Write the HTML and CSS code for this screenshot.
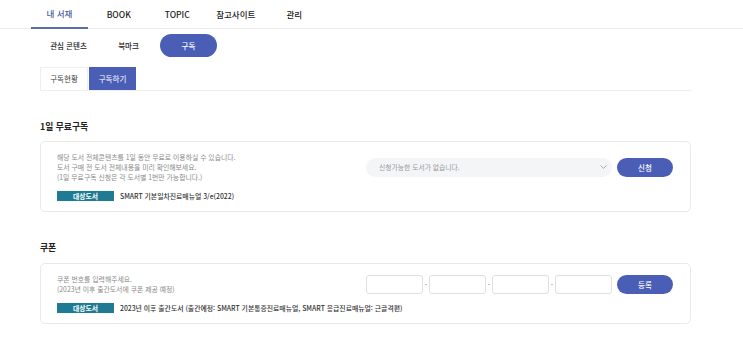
FILE: index.html
```html
<!DOCTYPE html>
<html lang="ko">
<head>
  <meta charset="UTF-8">
  <meta name="viewport" content="width=device-width, initial-scale=1.0">
  <title>내 서재 - 구독</title>
  <link rel="stylesheet" href="styles.css">
</head>
<body>
  <nav class="gnb">
    <a class="gnb-item active">내 서재</a>
    <a class="gnb-item">BOOK</a>
    <a class="gnb-item">TOPIC</a>
    <a class="gnb-item">참고사이트</a>
    <a class="gnb-item">관리</a>
  </nav>

  <div class="wrap">
    <div class="sub-menu">
      <a class="sub-item">관심 콘텐츠</a>
      <a class="sub-item">북마크</a>
      <a class="sub-item on">구독</a>
    </div>

    <div class="tabs">
      <a class="tab">구독현황</a>
      <a class="tab on">구독하기</a>
    </div>

    <h3 class="sec-title">1일 무료구독</h3>
    <div class="card">
      <div class="card-row">
        <p class="desc">
          해당 도서 전체콘텐츠를 1일 동안 무료로 이용하실 수 있습니다.<br>
          도서 구매 전 도서 전체내용을 미리 확인해보세요.<br>
          (1일 무료구독 신청은 각 도서별 1번만 가능합니다.)
        </p>
        <div class="controls">
          <div class="select">
            <span>신청가능한 도서가 없습니다.</span>
            <svg width="7" height="4" viewBox="0 0 7 4"><path d="M0.5 0.5 L3.5 3.3 L6.5 0.5" fill="none" stroke="#999" stroke-width="0.8"/></svg>
          </div>
          <button class="btn">신청</button>
        </div>
      </div>
      <div class="target">
        <span class="badge">대상도서</span>
        <span class="target-name">SMART 기본일차진료매뉴얼 3/e(2022)</span>
      </div>
    </div>

    <h3 class="sec-title second">쿠폰</h3>
    <div class="card">
      <div class="card-row">
        <p class="desc">
          쿠폰 번호를 입력해주세요.<br>
          (2023년 이후 출간도서에 쿠폰 제공 예정)
        </p>
        <div class="controls">
          <div class="coupon">
            <input type="text" class="code">
            <span class="dash">-</span>
            <input type="text" class="code">
            <span class="dash">-</span>
            <input type="text" class="code">
            <span class="dash">-</span>
            <input type="text" class="code">
          </div>
          <button class="btn">등록</button>
        </div>
      </div>
      <div class="target">
        <span class="badge">대상도서</span>
        <span class="target-name">2023년 이후 출간도서 (출간예정: SMART 기본통증진료매뉴얼, SMART 응급진료매뉴얼: 근골격편)</span>
      </div>
    </div>
  </div>
</body>
</html>
```

FILE: styles.css
```css
body {
  margin: 0;
  font-family: "Noto Sans CJK KR", "Noto Sans", sans-serif;
  color: #222;
  background: #fff;
}
a {
  cursor: pointer;
}

/* 상단 메뉴 */
.gnb {
  display: flex;
  height: 28px;
  padding-left: 31px;
  border-bottom: 1px solid #ebebeb;
}
.gnb-item {
  box-sizing: border-box;
  width: 58.5px;
  height: 29px;
  line-height: 28px;
  text-align: center;
  font-size: 8.5px;
  font-weight: 500;
  color: #222;
}
.gnb-item.active {
  width: 57px;
  margin-right: 1.5px;
  color: #4a5a9c;
  border-bottom: 2px solid #5b6fa6;
  line-height: 27px;
}

.wrap {
  width: 651px;
  margin-left: 40px;
}

/* 서브 메뉴 */
.sub-menu {
  display: flex;
  gap: 3px;
  padding-top: 5px;
}
.sub-item {
  width: 57px;
  height: 23px;
  line-height: 23px;
  text-align: center;
  font-size: 7.5px;
  font-weight: 500;
  color: #222;
  border-radius: 12px;
}
.sub-item.on {
  background: #4b5eb6;
  color: #fff;
}

/* 탭 */
.tabs {
  display: flex;
  margin-top: 10px;
  border-bottom: 1px solid #eee;
}
.tab {
  box-sizing: border-box;
  width: 48px;
  height: 23px;
  line-height: 22px;
  text-align: center;
  font-size: 7.5px;
  color: #444;
  border: 1px solid #eee;
  border-bottom: none;
}
.tab.on {
  width: 47px;
  margin-left: 1px;
  background: #4b5eb6;
  border-color: #4b5eb6;
  color: #fff;
}

.sec-title {
  margin: 29px 0 7px;
  font-size: 8.8px;
  line-height: 14px;
  font-weight: 700;
  color: #222;
}
.sec-title.second {
  margin-bottom: 8px;
}

/* 카드 */
.card {
  border: 1px solid #e9e9e9;
  border-radius: 5px;
  padding: 10px 17px 10px 16px;
}
.card-row {
  display: flex;
  justify-content: space-between;
  align-items: center;
}
.desc {
  margin: 0;
  font-size: 6.85px;
  line-height: 10px;
  color: #8a8a8a;
}
.controls {
  display: flex;
  gap: 5px;
  align-items: center;
}
.select {
  box-sizing: border-box;
  width: 246px;
  height: 19px;
  padding: 0 5px 0 13px;
  display: flex;
  justify-content: space-between;
  align-items: center;
  background: #f4f5f7;
  border-radius: 10px;
  font-size: 6.8px;
  color: #999;
}
.btn {
  width: 56px;
  height: 19px;
  padding: 0;
  border: none;
  border-radius: 10px;
  background: #4b5eb6;
  color: #fff;
  font-family: inherit;
  font-size: 7.5px;
  font-weight: 500;
}
.coupon {
  display: flex;
  align-items: center;
}
.code {
  box-sizing: border-box;
  width: 57px;
  height: 19px;
  margin: 0;
  border: 1px solid #e0e0e0;
  border-radius: 3px;
  background: #fff;
}
.dash {
  width: 6px;
  text-align: center;
  font-size: 6.5px;
  color: #555;
}

.target {
  display: flex;
  align-items: center;
  margin-top: 9px;
}
.badge {
  width: 57px;
  height: 10px;
  line-height: 10px;
  text-align: center;
  background: #1f7a93;
  color: #fff;
  font-size: 6.8px;
  font-weight: 700;
}
.target-name {
  margin-left: 6px;
  font-size: 6.85px;
  font-weight: 500;
  color: #333;
}
```
